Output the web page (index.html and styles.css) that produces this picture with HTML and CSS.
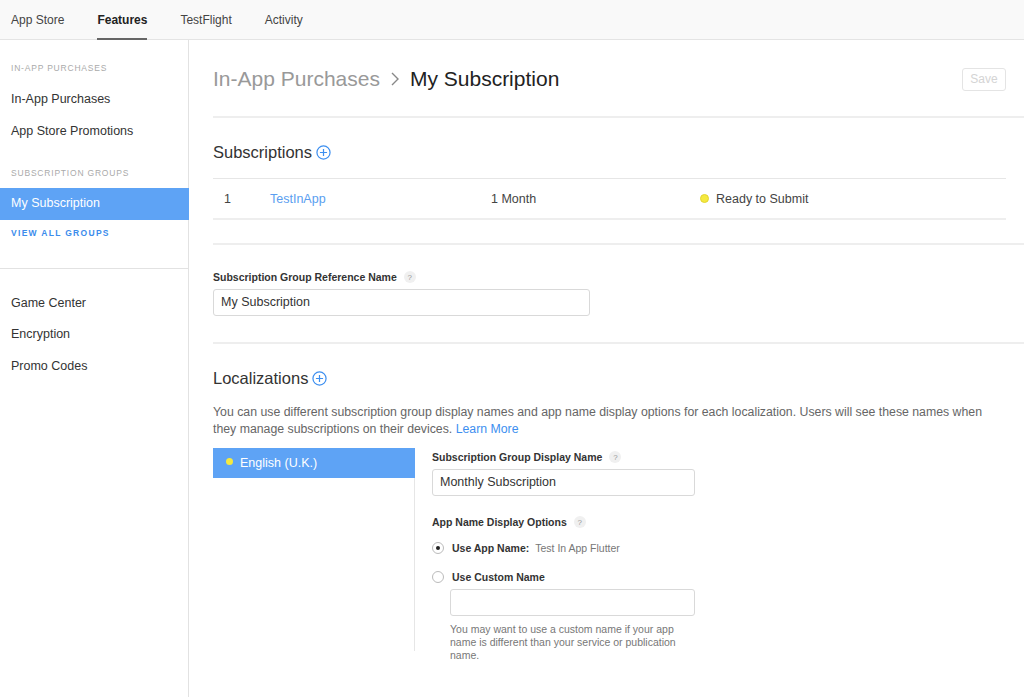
FILE: index.html
```html
<!DOCTYPE html>
<html lang="en">
<head>
    <meta charset="UTF-8">
    <title>My Subscription</title>
    <link rel="stylesheet" href="styles.css">
</head>
<body>

    <nav class="topnav">
        <a class="tab">App Store</a>
        <a class="tab active">Features</a>
        <a class="tab">TestFlight</a>
        <a class="tab">Activity</a>
    </nav>

    <div class="layout">
        <aside class="sidebar">
            <div class="side-head">In-App Purchases</div>
            <a class="side-item">In-App Purchases</a>
            <a class="side-item">App Store Promotions</a>
            <div class="side-head second">Subscription Groups</div>
            <a class="side-item selected">My Subscription</a>
            <a class="view-all">View All Groups</a>
            <div class="side-divider"></div>
            <a class="side-item">Game Center</a>
            <a class="side-item">Encryption</a>
            <a class="side-item">Promo Codes</a>
        </aside>

        <main class="content">
            <div class="title-row">
                <h1 class="crumbs">
                    <span class="crumb-parent">In-App Purchases</span>
                    <svg class="chevron" width="10" height="16" viewBox="0 0 10 16"><path d="M2 2l6 6-6 6" fill="none" stroke="#888" stroke-width="1.4"/></svg>
                    <span>My Subscription</span>
                </h1>
                <button class="save">Save</button>
            </div>

            <section class="block">
                <h2 class="section-title">Subscriptions
                    <svg class="plus" width="15" height="15" viewBox="0 0 16 16"><circle cx="8" cy="8" r="7" fill="none" stroke="#3d8ff0" stroke-width="1.3"/><path d="M8 4.2v7.6M4.2 8h7.6" stroke="#3d8ff0" stroke-width="1.3"/></svg>
                </h2>
                <div class="sub-table">
                    <div class="sub-row">
                        <span class="col-num">1</span>
                        <a class="col-name">TestInApp</a>
                        <span class="col-dur">1 Month</span>
                        <span class="col-status"><i class="dot"></i>Ready to Submit</span>
                    </div>
                </div>
            </section>

            <section class="block">
                <label class="field-label">Subscription Group Reference Name <span class="help">?</span></label>
                <div class="input wide">My Subscription</div>
            </section>

            <section class="block last">
                <h2 class="section-title">Localizations
                    <svg class="plus" width="15" height="15" viewBox="0 0 16 16"><circle cx="8" cy="8" r="7" fill="none" stroke="#3d8ff0" stroke-width="1.3"/><path d="M8 4.2v7.6M4.2 8h7.6" stroke="#3d8ff0" stroke-width="1.3"/></svg>
                </h2>
                <p class="intro">You can use different subscription group display names and app name display options for each localization. Users will see these names when they manage subscriptions on their devices. <a class="link">Learn More</a></p>

                <div class="loc">
                    <div class="loc-list">
                        <div class="loc-item"><i class="dot"></i>English (U.K.)</div>
                    </div>
                    <div class="loc-detail">
                        <label class="field-label">Subscription Group Display Name <span class="help">?</span></label>
                        <div class="input mid">Monthly Subscription</div>

                        <label class="field-label options">App Name Display Options <span class="help">?</span></label>
                        <div class="radio-row">
                            <span class="radio checked"></span>
                            <span class="radio-label">Use App Name:</span>
                            <span class="radio-value">Test In App Flutter</span>
                        </div>
                        <div class="radio-row">
                            <span class="radio"></span>
                            <span class="radio-label">Use Custom Name</span>
                        </div>
                        <div class="custom">
                            <div class="input narrow"></div>
                            <p class="hint">You may want to use a custom name if your app name is different than your service or publication name.</p>
                        </div>
                    </div>
                </div>
            </section>
        </main>
    </div>

</body>
</html>
```

FILE: styles.css
```css
body {
    margin: 0;
    font-family: "Liberation Sans", Arial, sans-serif;
    color: #333;
    background-color: #fff;
    font-size: 13px;
}

a {
    cursor: pointer;
}

.topnav {
    height: 40px;
    background-color: #f9f9f9;
    border-bottom: 1px solid #e4e4e4;
    display: flex;
    padding-left: 11px;
    gap: 33px;
    box-sizing: border-box;
}

.tab {
    font-size: 12px;
    color: #444;
    line-height: 40px;
    height: 40px;
    box-sizing: border-box;
}

.tab.active {
    color: #222;
    font-weight: bold;
    border-bottom: 2px solid #666;
}

.layout {
    display: flex;
    min-height: 657px;
}

.sidebar {
    width: 188px;
    border-right: 1px solid #e2e2e2;
    padding-top: 23px;
    flex-shrink: 0;
}

.side-head {
    font-size: 8.5px;
    letter-spacing: 0.8px;
    text-transform: uppercase;
    color: #aaa;
    padding-left: 11px;
    margin-bottom: 11px;
}

.side-head.second {
    margin-top: 21px;
    margin-bottom: 10px;
}

.side-item {
    display: block;
    padding-left: 11px;
    font-size: 12.5px;
    color: #333;
    line-height: 31.5px;
}

.side-item.selected {
    background-color: #5ea3f5;
    color: #fff;
    width: 178px;
}

.view-all {
    display: block;
    padding-left: 11px;
    font-size: 8.5px;
    font-weight: bold;
    letter-spacing: 1.3px;
    text-transform: uppercase;
    color: #3b8cec;
    margin-top: 8px;
}

.side-divider {
    border-top: 1px solid #e2e2e2;
    margin: 30px 0 19px;
}

.content {
    flex: 1;
    padding-left: 24px;
}

.title-row {
    display: flex;
    justify-content: space-between;
    align-items: center;
    height: 76px;
    padding-right: 18px;
    border-bottom: 2px solid #eee;
}

.crumbs {
    margin: 0;
    font-size: 21px;
    font-weight: normal;
    color: #222;
    display: flex;
    align-items: center;
    gap: 10px;
    padding-top: 2px;
}

.crumb-parent {
    color: #999;
}

.save {
    font-family: inherit;
    font-size: 12px;
    color: #d4d4d4;
    background: #fff;
    border: 1px solid #e4e4e4;
    border-radius: 3px;
    width: 44px;
    height: 23px;
    padding: 0;
    margin-top: 2px;
}

.block {
    border-bottom: 2px solid #eee;
    padding-bottom: 26px;
}

.block.last {
    border-bottom: none;
}

.section-title {
    margin: 0;
    font-size: 16.5px;
    font-weight: normal;
    color: #333;
    padding-top: 17px;
    height: 34px;
    display: flex;
    align-items: center;
    gap: 4px;
}

.sub-table {
    margin-top: 9px;
    margin-right: 18px;
    border-top: 1px solid #e6e6e6;
    border-bottom: 2px solid #eee;
}

.block:first-of-type {
    padding-bottom: 23px;
}

.sub-row {
    display: flex;
    align-items: center;
    height: 39px;
    font-size: 12.5px;
    color: #444;
}

.col-num {
    width: 57px;
    padding-left: 11px;
    box-sizing: border-box;
}

.col-name {
    width: 221px;
    color: #5a9ef0;
}

.col-dur {
    width: 209px;
}

.col-status {
    display: flex;
    align-items: center;
}

.dot {
    display: inline-block;
    width: 9px;
    height: 9px;
    border-radius: 50%;
    background-color: #f5e93f;
    border: 1px solid #e2d530;
    box-sizing: border-box;
    margin-right: 7px;
}

.field-label {
    display: flex;
    align-items: center;
    font-size: 10.5px;
    font-weight: bold;
    color: #333;
    gap: 7px;
    margin-top: 26px;
    margin-bottom: 6px;
}

.help {
    display: inline-flex;
    justify-content: center;
    align-items: center;
    width: 12px;
    height: 12px;
    border-radius: 50%;
    background-color: #f0f0f0;
    color: #999;
    font-size: 8px;
    font-weight: normal;
}

.input {
    border: 1px solid #d9d9d9;
    border-radius: 3px;
    height: 27px;
    box-sizing: border-box;
    padding-left: 7px;
    font-size: 12.5px;
    line-height: 25px;
    color: #333;
}

.input.wide {
    width: 377px;
}

.input.mid {
    width: 263px;
}

.input.narrow {
    width: 245px;
}

.intro {
    margin: 9px 0 0;
    font-size: 12.3px;
    line-height: 17px;
    color: #666;
    padding-right: 20px;
}

.link {
    color: #3d8ff0;
}

.loc {
    display: flex;
    margin-top: 10px;
}

.loc-list {
    width: 201px;
    border-right: 1px solid #e6e6e6;
    height: 203px;
}

.loc-item {
    background-color: #5ea3f5;
    color: #fff;
    height: 30px;
    display: flex;
    align-items: center;
    padding-left: 13px;
    font-size: 12.5px;
    margin-right: -1px;
}

.loc-item .dot {
    border: none;
    width: 7px;
    height: 7px;
    margin-top: -4px;
}

.loc-detail {
    padding-left: 17px;
}

.loc-detail .field-label {
    margin-top: 3px;
}

.loc-detail .field-label.options {
    margin-top: 20px;
    margin-bottom: 11px;
}

.radio-row {
    display: flex;
    align-items: center;
    height: 18px;
    font-size: 10.5px;
    margin-bottom: 11px;
}

.radio {
    width: 12px;
    height: 12px;
    border: 1px solid #bbb;
    border-radius: 50%;
    box-sizing: border-box;
    margin-right: 8px;
    position: relative;
    background: #fff;
}

.radio.checked::after {
    content: "";
    position: absolute;
    left: 3px;
    top: 3px;
    width: 4px;
    height: 4px;
    border-radius: 50%;
    background: #222;
}

.radio-label {
    font-weight: bold;
    color: #333;
    margin-right: 6px;
}

.radio-value {
    color: #777;
    font-size: 10.5px;
}

.custom {
    padding-left: 18px;
    margin-top: -8px;
}

.hint {
    margin: 7px 0 0;
    width: 250px;
    font-size: 10.5px;
    line-height: 13px;
    color: #777;
}
```
